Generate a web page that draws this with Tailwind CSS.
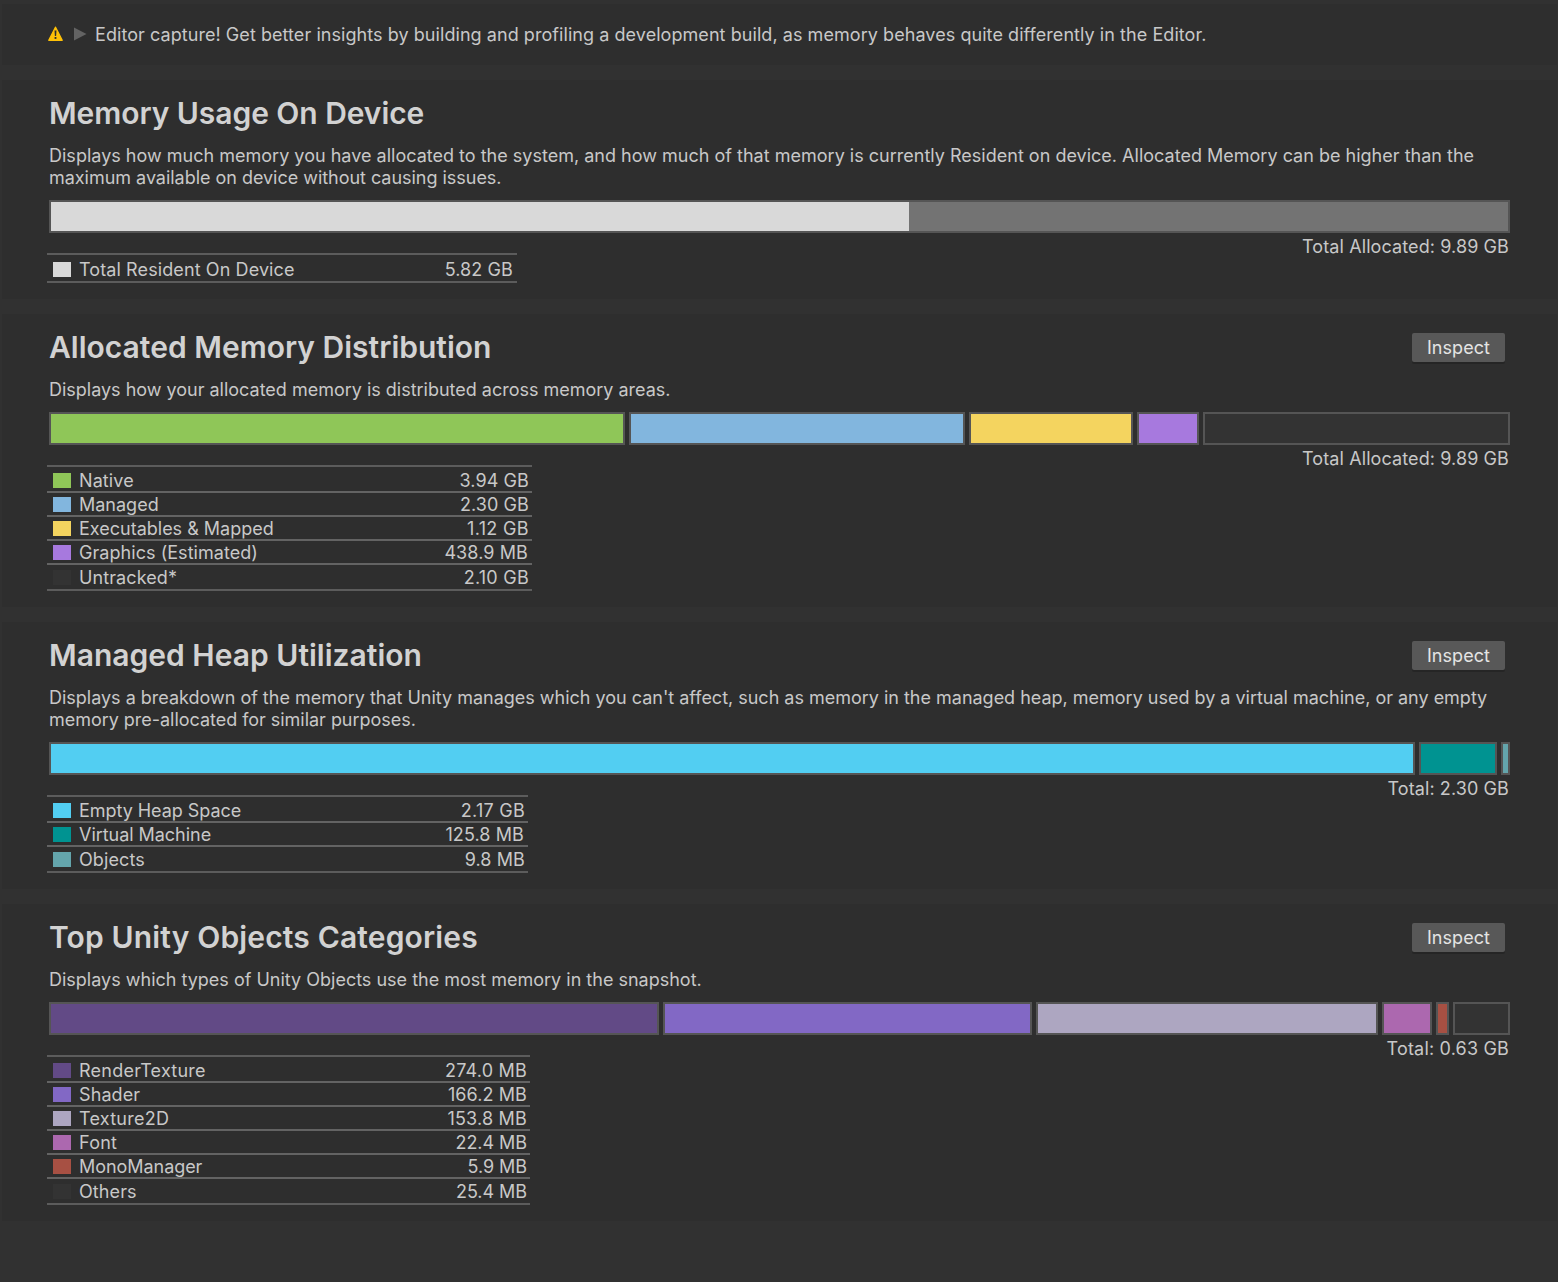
<!DOCTYPE html>
<html lang="en">
<head>
<meta charset="utf-8">
<title>Memory Profiler - Summary</title>
<script src="https://cdn.jsdelivr.net/npm/@tailwindcss/browser@4"></script>
</head>
<body class="bg-[#313131] font-['Inter',sans-serif] text-[18px] leading-[22px] tracking-[0.1px] whitespace-nowrap text-[#c8c8c8]">
<main class="flex h-[1282px] flex-col gap-[15px] overflow-hidden pt-1 pr-px pl-0.5">

  <section class="flex h-[61px] shrink-0 items-center bg-[#2e2e2e] pb-px pl-[46px]">
    <svg class="h-[16px] w-[15px]" viewBox="0 0 15 16"><path d="M7.5 1.2 14.2 14.2H.8Z" fill="#ffc107" stroke="#ffc107" stroke-width="1.4" stroke-linejoin="round"/><path d="M6.5 4.6h2L8.1 10H6.9Z" fill="#2e2e2e"/><rect x="6.6" y="11" width="1.8" height="1.9" fill="#2e2e2e"/></svg>
    <svg class="ml-[11px] h-[14px] w-[13px]" viewBox="0 0 13 14"><path d="M0 .5 12.5 7 0 13.5Z" fill="#636363"/></svg>
    <p class="ml-2 pt-0.5 tracking-[0.06px]">Editor capture! Get better insights by building and profiling a development build, as memory behaves quite differently in the Editor.</p>
  </section>

  <section class="shrink-0 bg-[#2e2e2e] pt-[15px] pr-[47px] pb-4 pl-[47px]">
    <h2 class="text-[30px] leading-9 font-semibold tracking-[-0.06px] text-[#d2d2d2]">Memory Usage On Device</h2>
    <p class="mt-3.5 tracking-[0.01px]">Displays how much memory you have allocated to the system, and how much of that memory is currently Resident on device. Allocated Memory can be higher than the<br><span class="tracking-[-0.03px]">maximum available on device without causing issues.</span></p>
    <div class="mt-[11px] flex h-[33px] border-2 border-[#555] bg-[#737373]">
      <div class="w-[858px] bg-[#d9d9d9]"></div>
    </div>
    <div class="flex items-start justify-between">
      <ul class="mt-5 -ml-0.5 w-[470px] border-y-2 border-[#5c5c5c]">
        <li class="flex h-[26px] pt-[7px] pr-1 pl-1.5"><i class="h-[15px] w-[18px] bg-[#d9d9d9]"></i><span class="-mt-[3px] ml-2 flex-1">Total Resident On Device</span><span class="-mt-[3px]">5.82 GB</span></li>
      </ul>
      <p class="mt-[3px] pr-px">Total Allocated: 9.89 GB</p>
    </div>
  </section>

  <section class="shrink-0 bg-[#2e2e2e] pt-[15px] pr-[47px] pb-4 pl-[47px]">
    <div class="flex h-9 items-center justify-between pr-[5px]">
      <h2 class="text-[30px] leading-9 font-semibold tracking-[0.01px] text-[#d2d2d2]">Allocated Memory Distribution</h2>
      <button class="h-[29px] w-[93px] rounded-[2px] bg-[#585858] pt-0.5 text-[#e4e4e4] tracking-[0.05px] shadow-[0_2px_0_#252525]">Inspect</button>
    </div>
    <p class="mt-3.5 tracking-[-0.01px]">Displays how your allocated memory is distributed across memory areas.</p>
    <div class="mt-[11px] flex h-[33px] gap-1">
      <div class="w-[576px] border-2 border-[#555] bg-[#8fc658]"></div>
      <div class="w-[336px] border-2 border-[#555] bg-[#82b6de]"></div>
      <div class="w-[164px] border-2 border-[#555] bg-[#f4d45f]"></div>
      <div class="w-[62px] border-2 border-[#555] bg-[#a779de]"></div>
      <div class="flex-1 border-2 border-[#555] bg-[#333]"></div>
    </div>
    <div class="flex items-start justify-between">
      <ul class="mt-5 -ml-0.5 w-[485px] divide-y-2 divide-[#636363] border-y-2 border-[#5c5c5c]">
        <li class="flex h-[26px] pt-1.5 pr-[3px] pl-1.5"><i class="h-[15px] w-[18px] bg-[#8fc658]"></i><span class="-mt-[3px] ml-2 flex-1">Native</span><span class="-mt-[3px]">3.94 GB</span></li>
        <li class="flex h-6 pt-1 pr-[3px] pl-1.5"><i class="h-[15px] w-[18px] bg-[#82b6de]"></i><span class="-mt-[3px] ml-2 flex-1 tracking-normal">Managed</span><span class="-mt-[3px]">2.30 GB</span></li>
        <li class="flex h-6 pt-1 pr-[3px] pl-1.5"><i class="h-[15px] w-[18px] bg-[#f4d45f]"></i><span class="-mt-[3px] ml-2 flex-1 tracking-normal">Executables &amp; Mapped</span><span class="-mt-[3px] tracking-[0.35px]">1.12 GB</span></li>
        <li class="flex h-6 pt-1 pr-[3px] pl-1.5"><i class="h-[15px] w-[18px] bg-[#a779de]"></i><span class="-mt-[3px] ml-2 flex-1 tracking-[0.05px]">Graphics (Estimated)</span><span class="-mt-[3px] pr-px">438.9 MB</span></li>
        <li class="flex h-6 pt-[5px] pr-[3px] pl-1.5"><i class="h-[15px] w-[18px] bg-[#333]"></i><span class="-mt-[3px] ml-2 flex-1">Untracked*</span><span class="-mt-[3px] tracking-[0.25px]">2.10 GB</span></li>
      </ul>
      <p class="mt-[3px] pr-px">Total Allocated: 9.89 GB</p>
    </div>
  </section>

  <section class="shrink-0 bg-[#2e2e2e] pt-[15px] pr-[47px] pb-4 pl-[47px]">
    <div class="flex h-9 items-center justify-between pr-[5px]">
      <h2 class="text-[30px] leading-9 font-semibold tracking-[0.01px] text-[#d2d2d2]">Managed Heap Utilization</h2>
      <button class="h-[29px] w-[93px] rounded-[2px] bg-[#585858] pt-0.5 text-[#e4e4e4] tracking-[0.05px] shadow-[0_2px_0_#252525]">Inspect</button>
    </div>
    <p class="mt-3.5 tracking-[-0.01px]">Displays a breakdown of the memory that Unity manages which you can't affect, such as memory in the managed heap, memory used by a virtual machine, or any empty<br><span class="tracking-[-0.03px]">memory pre-allocated for similar purposes.</span></p>
    <div class="mt-[11px] flex h-[33px] gap-1">
      <div class="w-[1366px] border-2 border-[#555] bg-[#52cef2]"></div>
      <div class="w-[78px] border-2 border-[#555] bg-[#009391]"></div>
      <div class="flex-1 border-2 border-[#555] bg-[#64a5ac]"></div>
    </div>
    <div class="flex items-start justify-between">
      <ul class="mt-5 -ml-0.5 w-[481px] divide-y-2 divide-[#636363] border-y-2 border-[#5c5c5c]">
        <li class="flex h-[26px] pt-1.5 pr-[3px] pl-1.5"><i class="h-[15px] w-[18px] bg-[#52cef2]"></i><span class="-mt-[3px] ml-2 flex-1 tracking-[-0.04px]">Empty Heap Space</span><span class="-mt-[3px] tracking-[0.25px]">2.17 GB</span></li>
        <li class="flex h-6 pt-1 pr-[3px] pl-1.5"><i class="h-[15px] w-[18px] bg-[#009391]"></i><span class="-mt-[3px] ml-2 flex-1 tracking-[-0.04px]">Virtual Machine</span><span class="-mt-[3px] pr-px">125.8 MB</span></li>
        <li class="flex h-6 pt-[5px] pr-[3px] pl-1.5"><i class="h-[15px] w-[18px] bg-[#64a5ac]"></i><span class="-mt-[3px] ml-2 flex-1">Objects</span><span class="-mt-[3px]">9.8 MB</span></li>
      </ul>
      <p class="mt-[3px] pr-px">Total: 2.30 GB</p>
    </div>
  </section>

  <section class="shrink-0 bg-[#2e2e2e] pt-[15px] pr-[47px] pb-4 pl-[47px]">
    <div class="flex h-9 items-center justify-between pr-[5px]">
      <h2 class="text-[30px] leading-9 font-semibold tracking-[0.15px] text-[#d2d2d2]">Top Unity Objects Categories</h2>
      <button class="h-[29px] w-[93px] rounded-[2px] bg-[#585858] pt-0.5 text-[#e4e4e4] tracking-[0.05px] shadow-[0_2px_0_#252525]">Inspect</button>
    </div>
    <p class="mt-3.5 tracking-normal">Displays which types of Unity Objects use the most memory in the snapshot.</p>
    <div class="mt-[11px] flex h-[33px] gap-1">
      <div class="w-[610px] border-2 border-[#555] bg-[#624a86]"></div>
      <div class="w-[369px] border-2 border-[#555] bg-[#8268c5]"></div>
      <div class="w-[342px] border-2 border-[#555] bg-[#ada6c1]"></div>
      <div class="w-[50px] border-2 border-[#555] bg-[#ac68af]"></div>
      <div class="w-[13px] border-2 border-[#555] bg-[#a75043]"></div>
      <div class="flex-1 border-2 border-[#555] bg-[#333]"></div>
    </div>
    <div class="flex items-start justify-between">
      <ul class="mt-5 -ml-0.5 w-[483px] divide-y-2 divide-[#636363] border-y-2 border-[#5c5c5c]">
        <li class="flex h-[26px] pt-1.5 pr-[3px] pl-1.5"><i class="h-[15px] w-[18px] bg-[#624a86]"></i><span class="-mt-[3px] ml-2 flex-1 tracking-[0.24px]">RenderTexture</span><span class="-mt-[3px] tracking-[0.2px]">274.0 MB</span></li>
        <li class="flex h-6 pt-1 pr-[3px] pl-1.5"><i class="h-[15px] w-[18px] bg-[#8268c5]"></i><span class="-mt-[3px] ml-2 flex-1">Shader</span><span class="-mt-[3px]">166.2 MB</span></li>
        <li class="flex h-6 pt-1 pr-[3px] pl-1.5"><i class="h-[15px] w-[18px] bg-[#ada6c1]"></i><span class="-mt-[3px] ml-2 flex-1 tracking-[0.24px]">Texture2D</span><span class="-mt-[3px] tracking-[0.2px]">153.8 MB</span></li>
        <li class="flex h-6 pt-1 pr-[3px] pl-1.5"><i class="h-[15px] w-[18px] bg-[#ac68af]"></i><span class="-mt-[3px] ml-2 flex-1 tracking-[0.24px]">Font</span><span class="-mt-[3px] tracking-[-0.05px]">22.4 MB</span></li>
        <li class="flex h-6 pt-1 pr-[3px] pl-1.5"><i class="h-[15px] w-[18px] bg-[#a75043]"></i><span class="-mt-[3px] ml-2 flex-1 tracking-[-0.05px]">MonoManager</span><span class="-mt-[3px] tracking-[-0.05px]">5.9 MB</span></li>
        <li class="flex h-6 pt-[5px] pr-[3px] pl-1.5"><i class="h-[15px] w-[18px] bg-[#333]"></i><span class="-mt-[3px] ml-2 flex-1">Others</span><span class="-mt-[3px] tracking-[-0.05px]">25.4 MB</span></li>
      </ul>
      <p class="mt-[3px] pr-px tracking-[0.18px]">Total: 0.63 GB</p>
    </div>
  </section>
</main>
</body>
</html>
